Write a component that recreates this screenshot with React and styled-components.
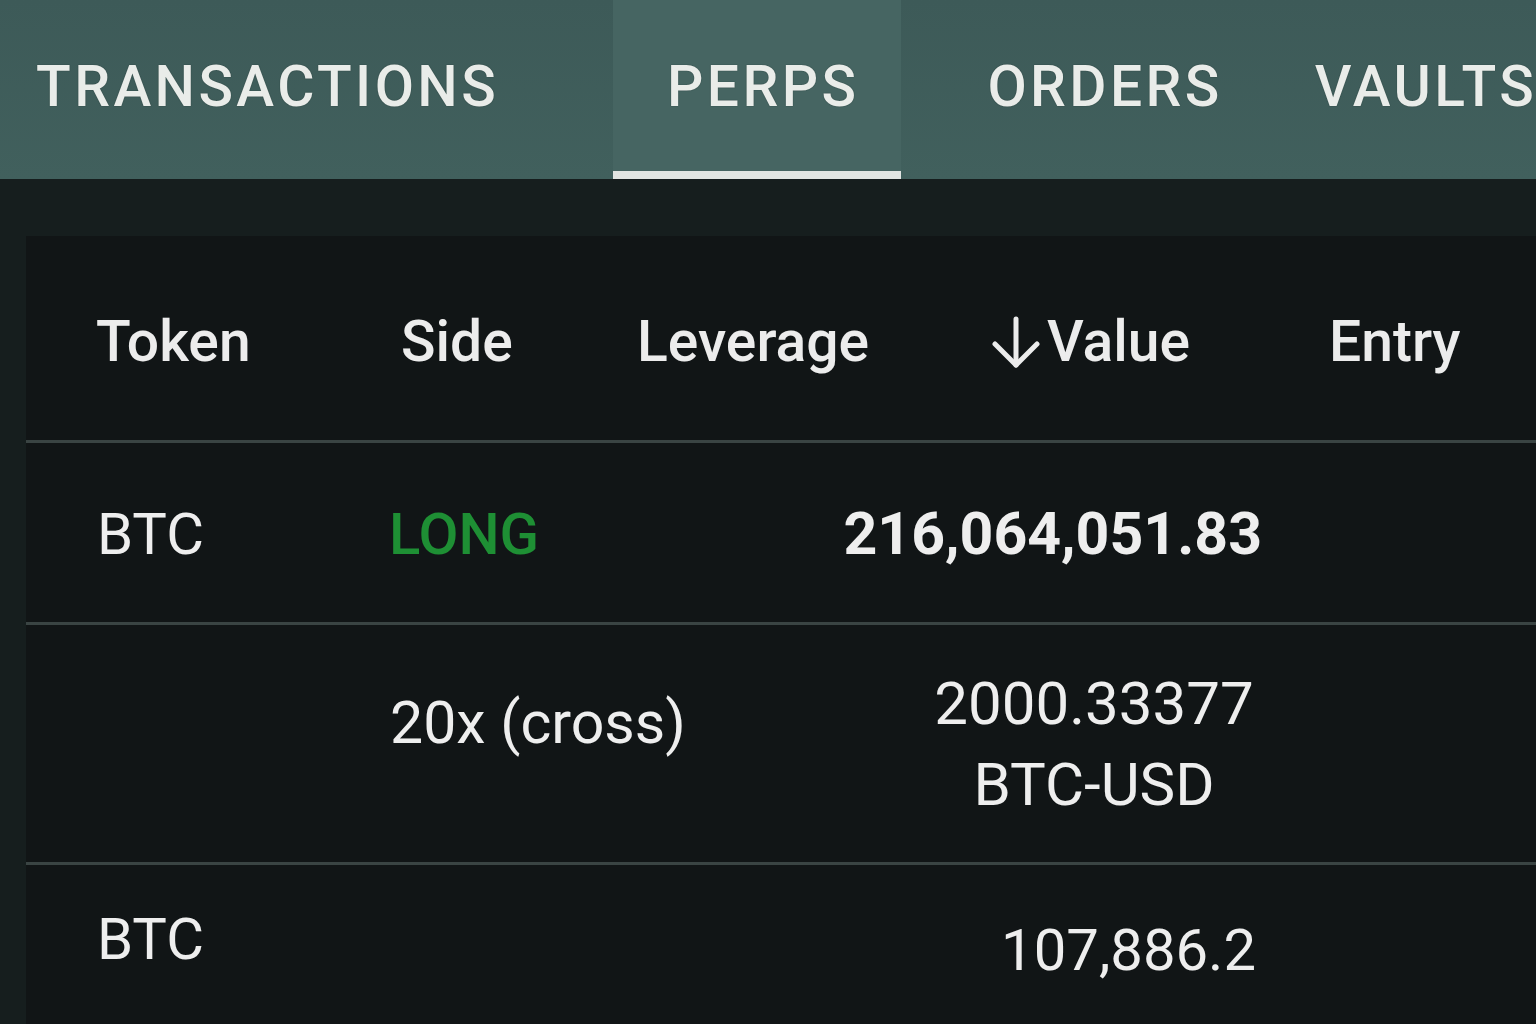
import React from "react";
import styled, { createGlobalStyle } from "styled-components";

const Global = createGlobalStyle`
  html, body { margin: 0; padding: 0; background: #161e1e; overflow: hidden; }
  body { font-family: Roboto, "Noto Sans", "Liberation Sans", sans-serif; }
  #root { width: 1536px; height: 1024px; }
`;

const Page = styled.div`
  width: 1536px;
  height: 1024px;
  display: flex;
  flex-direction: column;
  background: #161e1e;
  overflow: hidden;
`;

const TabBar = styled.nav`
  height: 179px;
  flex: none;
  display: flex;
  align-items: stretch;
  background: linear-gradient(180deg, #3d5a58 0%, #41605d 100%);
  overflow: hidden;
`;

const Tab = styled.div`
  flex: none;
  display: flex;
  align-items: center;
  box-sizing: border-box;
  padding: 2px ${(p) => p.$pr}px 0 ${(p) => p.$pl}px;
  font-size: 57px;
  font-weight: 500;
  letter-spacing: 3.4px;
  color: #e9ece9;
  text-shadow: 0 0 1px rgba(10, 30, 28, 0.8);
  background: ${(p) => (p.$active ? "#466562" : "transparent")};
  border-bottom: 8px solid ${(p) => (p.$active ? "#e2e6e3" : "transparent")};
  white-space: nowrap;
`;

const Body = styled.div`
  flex: 1;
  display: flex;
  padding: 57px 0 0 26px;
  min-height: 0;
`;

const Panel = styled.section`
  flex: 1;
  background: #111516;
  display: flex;
  flex-direction: column;
`;

const Row = styled.div`
  display: grid;
  grid-template-columns: 363px 215px 326px 360px 1fr;
  height: ${(p) => p.$h}px;
  align-items: ${(p) => p.$align || "center"};
  border-bottom: ${(p) => (p.$last ? "none" : "3px solid #3a4443")};
  box-sizing: content-box;
  flex: none;
`;

const HeadCell = styled.div`
  padding-left: ${(p) => p.$pl}px;
  padding-top: 9px;
  font-size: 57px;
  font-weight: 500;
  color: #ececec;
  display: flex;
  align-items: center;
  line-height: 1.2;
  white-space: nowrap;
`;

const Cell = styled.div`
  grid-column: ${(p) => p.$col || "auto"};
  padding-left: ${(p) => p.$pl || 0}px;
  padding-right: ${(p) => p.$pr || 0}px;
  margin-top: ${(p) => p.$mt || 0}px;
  margin-bottom: ${(p) => p.$mb || 0}px;
  justify-self: ${(p) => p.$justify || "start"};
  text-align: ${(p) => p.$ta || "left"};
  font-size: ${(p) => p.$fs || 58}px;
  font-weight: ${(p) => p.$fw || 400};
  color: ${(p) => p.$color || "#eeeeee"};
  line-height: ${(p) => p.$lh || 1.2};
  white-space: nowrap;
`;

const ArrowIcon = styled.svg`
  width: 48px;
  height: 52px;
  margin-right: 7px;
  flex: none;
`;

const SortArrow = () => (
  <ArrowIcon viewBox="0 0 48 52" fill="none" stroke="#ececec" strokeWidth="5" strokeLinecap="round" strokeLinejoin="round">
    <line x1="24" y1="3" x2="24" y2="49" />
    <polyline points="3,28 24,49 45,28" />
  </ArrowIcon>
);

export default function App() {
  return (
    <Page>
      <Global />
      <TabBar>
        <Tab $pl={36} $pr={114}>TRANSACTIONS</Tab>
        <Tab $pl={54} $pr={42} $active>PERPS</Tab>
        <Tab $pl={86} $pr={46}>ORDERS</Tab>
        <Tab $pl={46} $pr={20}>VAULTS</Tab>
      </TabBar>
      <Body>
        <Panel>
          <Row $h={204}>
            <HeadCell $pl={70}>Token</HeadCell>
            <HeadCell $pl={12}>Side</HeadCell>
            <HeadCell $pl={33}>Leverage</HeadCell>
            <HeadCell $pl={62}>
              <SortArrow />
              Value
            </HeadCell>
            <HeadCell $pl={39}>Entry</HeadCell>
          </Row>
          <Row $h={179}>
            <Cell $pl={71} $mt={4}>BTC</Cell>
            <Cell $fw={500} $color="#1e8f34" $mt={4}>LONG</Cell>
            <Cell $col="3 / 5" $justify="end" $pr={28} $fs={59} $fw={700} $mt={4}>
              216,064,051.83
            </Cell>
          </Row>
          <Row $h={237}>
            <Cell $col="2 / 4" $pl={1} $fs={59} $mb={40}>20x (cross)</Cell>
            <Cell $col="4 / 5" $justify="center" $ta="center" $pr={32} $fs={60} $lh={1.35}>
              2000.33377
              <br />
              BTC-USD
            </Cell>
          </Row>
          <Row $h={180} $align="start" $last>
            <Cell $pl={71} $mt={40}>BTC</Cell>
            <Cell $col="4 / 5" $justify="end" $pr={34} $mt={51}>107,886.2</Cell>
          </Row>
        </Panel>
      </Body>
    </Page>
  );
}
